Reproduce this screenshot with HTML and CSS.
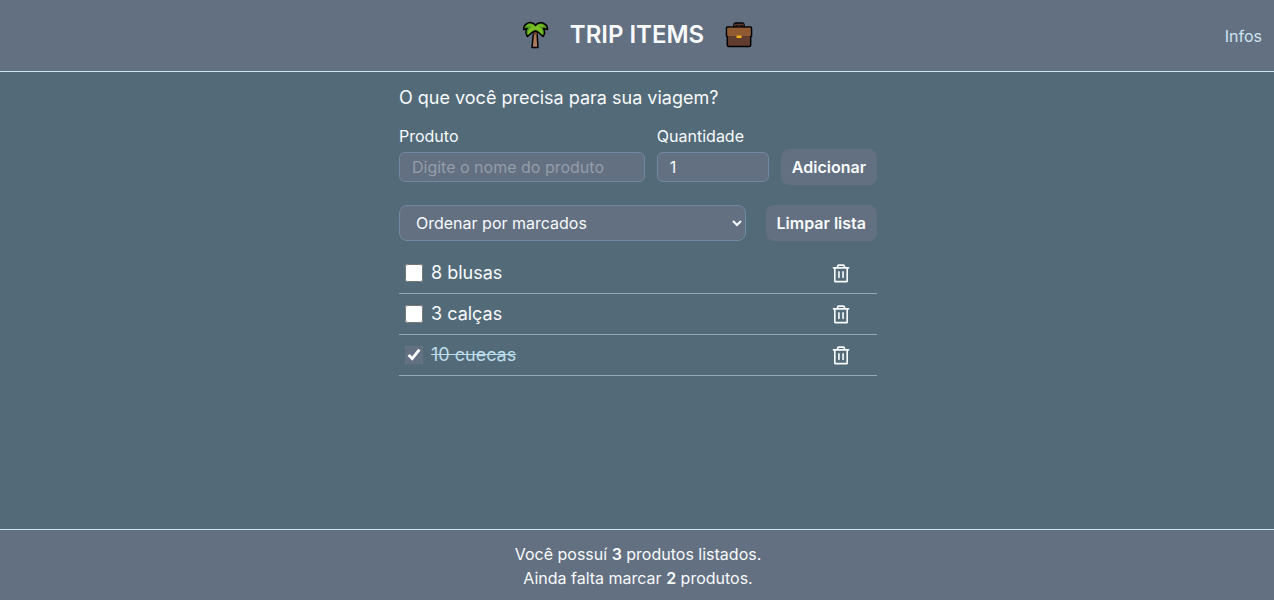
FILE: index.html
```html
<!DOCTYPE html>
<html lang="pt-BR">
<head>
<meta charset="utf-8">
<meta name="viewport" content="width=device-width, initial-scale=1">
<title>Trip Items</title>
<link rel="stylesheet" href="styles.css">
</head>
<body>
<svg class="sprite" aria-hidden="true">
  <symbol id="trash" viewBox="0 0 256 256">
    <path d="M216 56H40M104 104v64M152 104v64M200 56v152a8 8 0 0 1-8 8H64a8 8 0 0 1-8-8V56M168 56V40a16 16 0 0 0-16-16h-48a16 16 0 0 0-16 16v16" fill="none" stroke="currentColor" stroke-width="19" stroke-linecap="round" stroke-linejoin="round"/>
  </symbol>
</svg>
<header class="header">
  <div class="brand">
    <svg class="brand-icon" viewBox="0 0 28 28" aria-hidden="true">
      <path d="M12.500 11 11 26.500h6L16 11z" fill="#ad7b59" stroke="#000" stroke-width="1.500" stroke-linejoin="round"/>
      <path d="M12 10h5l-.5 3.500h-4z" fill="#6d4331"/>
      <path d="M14.500 4.500C13 1.500 8 .5 5.500 3 3.500 4 2.500 6 2.700 8.500L6 7.500C4.500 9.500 4.500 13 6.500 15.500L11 11.500l3.500-1.500 3 1.500 4.500 4c2-2.500 2-5.500.5-8l4 1C26.700 6 25.500 4 23.500 3 21 .8 16.500 1.500 14.500 4.500z" fill="#4f931f" stroke="#000" stroke-width="1.500" stroke-linejoin="round"/>
      <path d="M14.500 6C12 2.500 7 2.500 5 5l6 .5C8 7.500 6.500 10 7 13.500L13 8.500l3.500.5 5 4.500C22 10 21 7.500 18 5.500l5.500 0c-2-3-6.500-3-9 .5z" fill="#7abf25"/>
    </svg>
    <h1 class="title">TRIP ITEMS</h1>
    <svg class="brand-icon" viewBox="0 0 28 28" aria-hidden="true">
      <path d="M10 7V4q0-1 1-1h6q1 0 1 1v3" fill="none" stroke="#000" stroke-width="3.500"/>
      <path d="M10 7V3.500h8V7" fill="none" stroke="#60392d" stroke-width="1.300"/>
      <path d="M2.500 6h23q1 0 1 1v8h-.8v9q0 1.500-1.500 1.500H3.800Q2.300 25.500 2.300 24v-9H1.500V7q0-1 1-1z" fill="#613c30" stroke="#000" stroke-width="1.500"/>
      <path d="M2.300 7.500q0-.8.8-.8h21.800q.8 0 .8.800V15H2.300z" fill="#905a32"/>
      <rect x="11.500" y="14.500" width="5" height="2.500" rx=".5" fill="#efb314"/>
    </svg>
  </div>
  <a class="infos" href="#infos">Infos</a>
</header>
<main class="main">
  <h2 class="question">O que você precisa para sua viagem?</h2>
  <form class="form">
    <div class="field field-product">
      <label for="produto">Produto</label>
      <input class="input" id="produto" type="text" placeholder="Digite o nome do produto">
    </div>
    <div class="field field-quantity">
      <label for="quantidade">Quantidade</label>
      <input class="input" id="quantidade" type="number" min="1" value="1">
    </div>
    <button class="button" type="submit">Adicionar</button>
  </form>
  <div class="tools">
    <select class="select" aria-label="Ordenar lista">
      <option>Ordenar por marcados</option>
      <option>Ordenar por nome</option>
    </select>
    <button class="button" type="button">Limpar lista</button>
  </div>
  <ul class="list">
    <li class="item">
      <label class="item-label"><input class="check" type="checkbox"><span>8 blusas</span></label>
      <button class="remove" type="button" aria-label="Remover blusas"><svg class="remove-icon"><use href="#trash"/></svg></button>
    </li>
    <li class="item">
      <label class="item-label"><input class="check" type="checkbox"><span>3 calças</span></label>
      <button class="remove" type="button" aria-label="Remover calças"><svg class="remove-icon"><use href="#trash"/></svg></button>
    </li>
    <li class="item">
      <label class="item-label item-done"><input class="check" type="checkbox" checked><span>10 cuecas</span></label>
      <button class="remove" type="button" aria-label="Remover cuecas"><svg class="remove-icon"><use href="#trash"/></svg></button>
    </li>
  </ul>
</main>
<footer class="footer">
  <p>Você possuí <strong>3</strong> produtos listados.</p>
  <p>Ainda falta marcar <strong>2</strong> produtos.</p>
</footer>
</body>
</html>
```
FILE: styles.css
```css
:root {
  --page: #536b78;
  --panel: #637081;
  --line: #cee5f2;
  --edge: #7088a0;
  --text: #f8fafc;
}

* {
  box-sizing: border-box;
}

body {
  display: flex;
  flex-direction: column;
  min-height: 100vh;
  margin: 0;
  background: var(--page);
  color: var(--text);
  font: 16px/24px Inter, sans-serif;
}

h1, h2, p, ul {
  margin: 0;
  padding: 0;
}

input, select, button {
  font: inherit;
  color: inherit;
}

.sprite {
  position: absolute;
  width: 0;
  height: 0;
}

.header {
  display: grid;
  grid-template-columns: 1fr auto 1fr;
  align-items: center;
  height: 72px;
  padding: 0 12px;
  background: var(--panel);
  border-bottom: 1px solid var(--line);
}

.brand {
  display: flex;
  grid-column: 2;
  align-items: center;
  gap: 21px;
  padding-bottom: 2px;
}

.brand-icon {
  width: 28px;
  height: 28px;
}

.title {
  font-size: 24px;
  font-weight: 600;
  line-height: 32px;
}

.infos {
  justify-self: end;
  color: var(--line);
  text-decoration: none;
}

.main {
  flex: 1;
  width: 100%;
  max-width: 480px;
  margin: 0 auto;
  padding: 12px 0 12px 2px;
}

.question {
  font-size: 18px;
  font-weight: 400;
  line-height: 28px;
}

.form {
  display: flex;
  align-items: flex-end;
  gap: 12px;
  margin-top: 12px;
}

.field {
  display: flex;
  flex-direction: column;
  gap: 4px;
  padding-bottom: 3px;
}

.field-product {
  flex: 1;
}

.field-quantity {
  width: 112px;
}

.input {
  width: 100%;
  height: 30px;
  padding: 0 12px;
  background: var(--panel);
  border: 1px solid var(--edge);
  border-radius: 6px;
}

.input::placeholder {
  color: #949da9;
}

.button {
  height: 36px;
  padding: 0 11px;
  background: var(--panel);
  border: 0;
  border-radius: 8px;
  font-weight: 600;
}

.tools {
  display: flex;
  gap: 20px;
  margin-top: 20px;
}

.select {
  flex: 1;
  min-width: 0;
  height: 36px;
  padding: 0 0 0 12px;
  background: var(--panel);
  border: 1px solid var(--edge);
  border-radius: 8px;
}

.list {
  margin-top: 12px;
  list-style: none;
}

.item {
  display: flex;
  align-items: center;
  justify-content: space-between;
  height: 41px;
  padding: 0 25px 0 6px;
  border-bottom: 1px solid #90a9b8;
}

.item-label {
  display: flex;
  align-items: center;
  gap: 8px;
  font-size: 18px;
  line-height: 28px;
}

.item-done {
  color: #bcdcea;
  text-decoration: line-through;
}

.check {
  width: 18px;
  height: 18px;
  margin: 0;
  accent-color: var(--panel);
}

.remove {
  display: flex;
  padding: 2px 0 0;
  background: none;
  border: 0;
}

.remove-icon {
  width: 22px;
  height: 22px;
}

.footer {
  padding: 12px 0 10px 2px;
  background: var(--panel);
  border-top: 1px solid var(--line);
  text-align: center;
}

.footer strong {
  font-weight: 600;
}
```
